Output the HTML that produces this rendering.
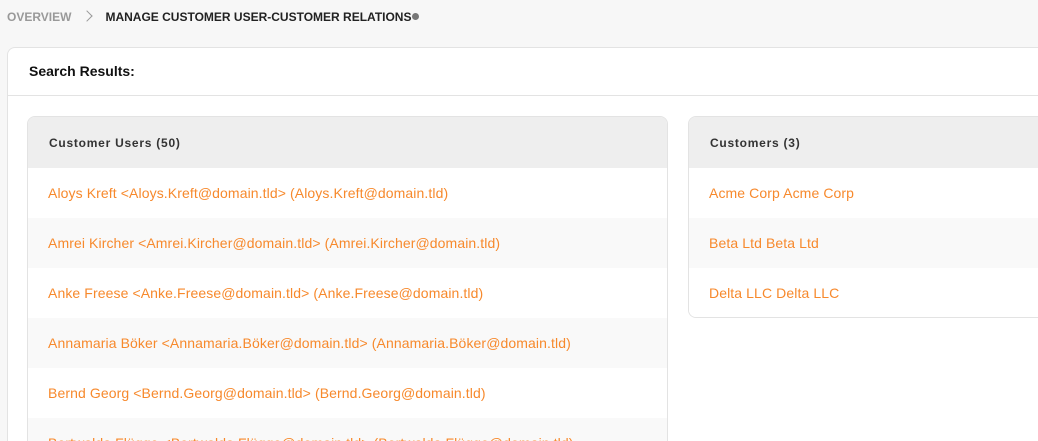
<!DOCTYPE html>
<html style="height:441px;overflow:hidden"><head><style>
html,body{height:441px;overflow:hidden}
body{margin:0;width:1038px;background:#f7f7f7;font-family:"Liberation Sans",sans-serif;position:relative}
.bc{position:absolute;top:10px;left:7px;font-size:12px;font-weight:bold;color:#222;white-space:nowrap}
.bc .o{color:#999}
.bc .ch{display:inline-block;width:7px;height:7px;border-right:1.5px solid #999;border-top:1.5px solid #999;transform:rotate(45deg);margin:0 14px 0 12px;vertical-align:1px}
.dot{display:inline-block;width:7px;height:7px;border-radius:50%;background:#777;margin-left:1px;vertical-align:1px}
.card{position:absolute;left:7px;top:47px;width:1031px;height:394px;background:#fff;border:1px solid #e3e3e3;border-right:0;border-bottom:0;border-radius:8px 0 0 0}
.ch1{height:47px;border-bottom:1px solid #e3e3e3;font-size:14px;font-weight:bold;color:#111;line-height:47px;padding-left:21px}
.panel{position:absolute;top:116px;border:1px solid #e3e3e3;border-radius:8px;overflow:hidden;background:#fff}
.ph{height:51px;background:#eee;font-size:12px;font-weight:bold;color:#333;line-height:52px;padding-left:21px;letter-spacing:.75px}
.r{height:50px;line-height:50px;padding-left:20px;font-size:14px;color:#f7892c;white-space:nowrap;letter-spacing:.1px}
</style></head><body>
<div class="bc"><span class="o">OVERVIEW</span><span class="ch"></span>MANAGE CUSTOMER USER-CUSTOMER RELATIONS<span class="dot"></span></div>
<div class="card"><div class="ch1">Search Results:</div></div>
<div class="panel" style="left:27px;width:639px;height:325px;border-bottom:0;border-radius:8px 8px 0 0">
<div class="ph">Customer Users (50)</div>
<div>
<div class="r" style="background:#fff">Aloys Kreft &lt;Aloys.Kreft@domain.tld&gt; (Aloys.Kreft@domain.tld)</div>
<div class="r" style="background:#f9f9f9">Amrei Kircher &lt;Amrei.Kircher@domain.tld&gt; (Amrei.Kircher@domain.tld)</div>
<div class="r" style="background:#fff">Anke Freese &lt;Anke.Freese@domain.tld&gt; (Anke.Freese@domain.tld)</div>
<div class="r" style="background:#f9f9f9">Annamaria Böker &lt;Annamaria.Böker@domain.tld&gt; (Annamaria.Böker@domain.tld)</div>
<div class="r" style="background:#fff">Bernd Georg &lt;Bernd.Georg@domain.tld&gt; (Bernd.Georg@domain.tld)</div>
<div class="r" style="background:#f9f9f9;height:24px;overflow:hidden">Bertwalda Flügge &lt;Bertwalda.Flügge@domain.tld&gt; (Bertwalda.Flügge@domain.tld)</div>
</div></div>
<div class="panel" style="left:688px;width:349px;height:200px;border-right:0;border-radius:8px 0 0 8px">
<div class="ph">Customers (3)</div>
<div class="r" style="background:#fff">Acme Corp Acme Corp</div>
<div class="r" style="background:#f9f9f9">Beta Ltd Beta Ltd</div>
<div class="r" style="background:#fff">Delta LLC Delta LLC</div>
</div>
</body></html>
